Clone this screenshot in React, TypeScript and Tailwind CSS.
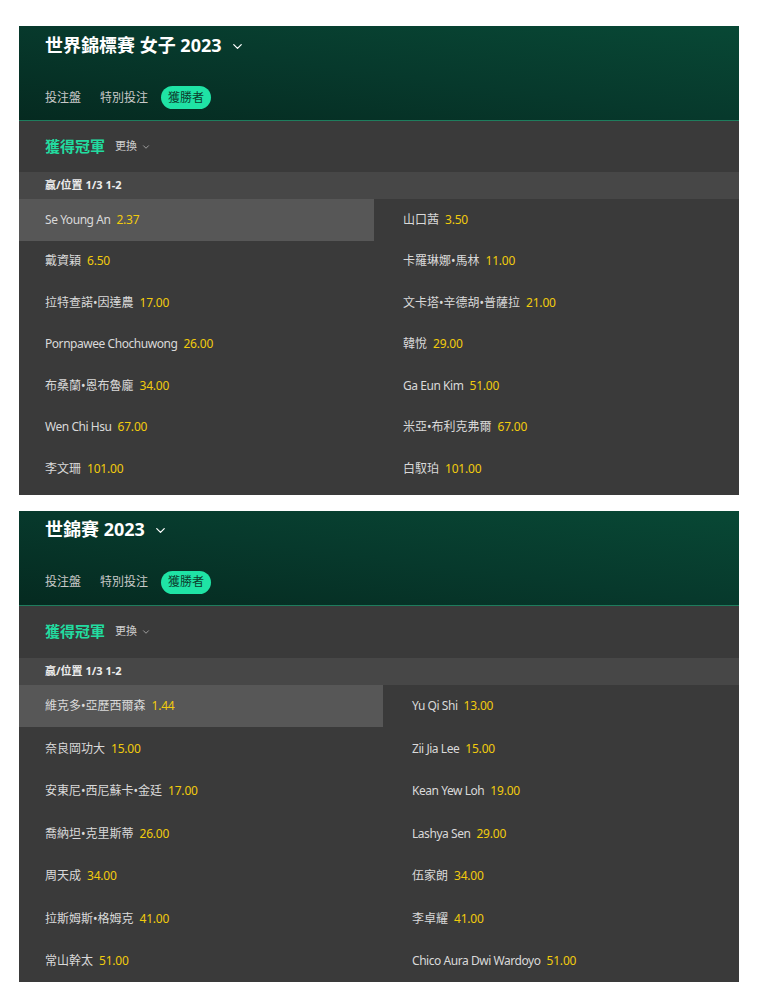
import { ChevronDown } from 'lucide-react';

type Runner = { name: string; odds: string };

const FONT = '"Noto Sans", "Noto Sans CJK TC", sans-serif';

const women: Runner[] = [
  { name: 'Se Young An', odds: '2.37' },
  { name: '山口茜', odds: '3.50' },
  { name: '戴資穎', odds: '6.50' },
  { name: '卡羅琳娜•馬林', odds: '11.00' },
  { name: '拉特查諾•因達農', odds: '17.00' },
  { name: '文卡塔•辛德胡•普薩拉', odds: '21.00' },
  { name: 'Pornpawee Chochuwong', odds: '26.00' },
  { name: '韓悅', odds: '29.00' },
  { name: '布桑蘭•恩布魯龐', odds: '34.00' },
  { name: 'Ga Eun Kim', odds: '51.00' },
  { name: 'Wen Chi Hsu', odds: '67.00' },
  { name: '米亞•布利克弗爾', odds: '67.00' },
  { name: '李文珊', odds: '101.00' },
  { name: '白馭珀', odds: '101.00' },
];

const men: Runner[] = [
  { name: '維克多•亞歷西爾森', odds: '1.44' },
  { name: 'Yu Qi Shi', odds: '13.00' },
  { name: '奈良岡功大', odds: '15.00' },
  { name: 'Zii Jia Lee', odds: '15.00' },
  { name: '安東尼•西尼蘇卡•金廷', odds: '17.00' },
  { name: 'Kean Yew Loh', odds: '19.00' },
  { name: '喬納坦•克里斯蒂', odds: '26.00' },
  { name: 'Lashya Sen', odds: '29.00' },
  { name: '周天成', odds: '34.00' },
  { name: '伍家朗', odds: '34.00' },
  { name: '拉斯姆斯•格姆克', odds: '41.00' },
  { name: '李卓耀', odds: '41.00' },
  { name: '常山幹太', odds: '51.00' },
  { name: 'Chico Aura Dwi Wardoyo', odds: '51.00' },
];

// latin names run a bit wide in Noto Sans, pull them in slightly
const isLatin = (s: string) => /^[\x20-\x7e]+$/.test(s);

function Market({ title, runners, wide }: { title: string; runners: Runner[]; wide?: boolean }) {
  return (
    <section className={`w-[720px] bg-[#3a3a3a] ${wide ? '' : 'pb-[5px]'}`}>
      <header className="border-b border-[#1e7d5d] bg-linear-to-tr from-[#052a20] via-[#07392c] to-[#084835] pl-[26px] pt-[7px] pb-[11px]">
        <div className="flex h-6 items-center gap-2 text-[18px] font-bold text-white">
          {title}
          <ChevronDown size={15} strokeWidth={2} className="mt-0.5 text-white" />
        </div>
        <div className="mt-[29px] flex h-[23px] items-center text-[12px] text-[#c9c9c9]">
          <span>投注盤</span>
          <span className="ml-[19px]">特別投注</span>
          <span className="ml-[13px] flex h-[23px] items-center rounded-full bg-[#1fe3a5] px-[7px] text-[12px] text-[#0c3b2c]">獲勝者</span>
        </div>
      </header>
      <div className={`flex items-center gap-2.5 pl-[26px] ${wide ? 'h-[52px]' : 'h-[51px]'}`}>
        <span className="text-[15px] font-bold text-[#22dca0]">獲得冠軍</span>
        <span className="flex items-center gap-1 text-[11px] text-[#cfcfcf]">
          更換
          <ChevronDown size={10} strokeWidth={1.6} />
        </span>
      </div>
      <div className="flex h-[27px] items-center bg-[#474747] pl-[26px] text-[11px] font-bold text-[#ededed]">
        贏/位置 1/3 1-2
      </div>
      <div className={`grid ${wide ? 'grid-cols-[364px_1fr]' : 'grid-cols-[355px_1fr]'}`}>
        {runners.map((r, i) => (
          <div
            key={i}
            className={`flex items-center text-[12px] ${wide ? 'h-[42.5px] pt-[1px]' : 'h-[41.5px]'} ${
              i % 2 === 0 ? 'pl-[26px]' : 'pl-[29px]'
            } ${i === 0 ? 'bg-[#575757]' : ''}`}
          >
            <span className={`text-[#d9d9d9] ${isLatin(r.name) ? 'tracking-[-0.45px]' : ''}`}>{r.name}</span>
            <span className="ml-[6px] tracking-[-0.2px] text-[#f1cb0d]">{r.odds}</span>
          </div>
        ))}
      </div>
    </section>
  );
}

export default function App() {
  return (
    <div className="flex min-h-[1000px] flex-col gap-4 bg-white pl-[19px] pt-[26px]" style={{ fontFamily: FONT }}>
      <Market title="世界錦標賽 女子 2023" runners={women} />
      <Market title="世錦賽 2023" runners={men} wide />
    </div>
  );
}
